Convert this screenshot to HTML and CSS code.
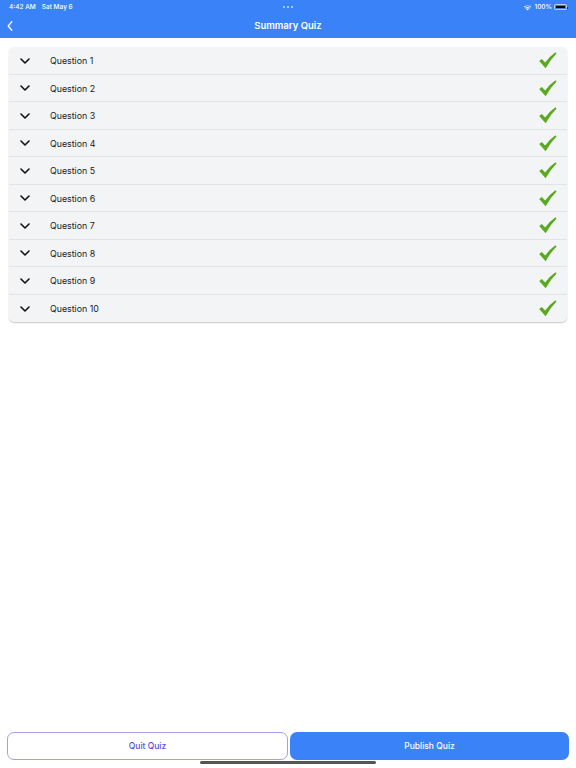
FILE: index.html
```html
<!DOCTYPE html>
<html>
<head>
<meta charset="utf-8">
<link rel="stylesheet" href="styles.css">
</head>
<body>
<div class="app">
  <header class="header">
    <div class="status">
      <div class="status-left"><span>4:42 AM</span><span>Sat May 6</span></div>
      <div class="status-dots"><i></i><i></i><i></i></div>
      <div class="status-right">
        <svg class="wifi" viewBox="0 0 12 9" width="9" height="7"><path d="M6 8.5 L4.2 6.6 A2.6 2.6 0 0 1 7.8 6.6 Z M2.9 5.3 A4.5 4.5 0 0 1 9.1 5.3 L8.3 6.1 A3.4 3.4 0 0 0 3.7 6.1 Z M1.2 3.6 A7 7 0 0 1 10.8 3.6 L10 4.4 A5.8 5.8 0 0 0 2 4.4 Z" fill="#fff"/></svg>
        <span>100%</span>
        <span class="battery"><span class="battery-fill"></span></span>
      </div>
    </div>
    <div class="navbar">
      <svg class="back" viewBox="0 0 8 14" width="6" height="10"><path d="M6.5 1 L1.5 7 L6.5 13" fill="none" stroke="#fff" stroke-width="1.8" stroke-linecap="round" stroke-linejoin="round"/></svg>
      <div class="title">Summary Quiz</div>
    </div>
  </header>

  <main class="content">
    <div class="list">
      <div class="row"><svg class="chev" viewBox="0 0 10 6"><path d="M1 1 L5 5 L9 1" fill="none" stroke="#111" stroke-width="1.6" stroke-linecap="round" stroke-linejoin="round"/></svg><span class="label">Question 1</span><svg class="check" viewBox="0 0 20 18"><path d="M1.2 9.6 L4 7.3 L7.5 11.2 Q12 4.8 18.4 0.3 L19.6 1.6 Q13.2 8 8 17.2 Z" fill="#5aa91f"/></svg></div>
      <div class="row"><svg class="chev" viewBox="0 0 10 6"><path d="M1 1 L5 5 L9 1" fill="none" stroke="#111" stroke-width="1.6" stroke-linecap="round" stroke-linejoin="round"/></svg><span class="label">Question 2</span><svg class="check" viewBox="0 0 20 18"><path d="M1.2 9.6 L4 7.3 L7.5 11.2 Q12 4.8 18.4 0.3 L19.6 1.6 Q13.2 8 8 17.2 Z" fill="#5aa91f"/></svg></div>
      <div class="row"><svg class="chev" viewBox="0 0 10 6"><path d="M1 1 L5 5 L9 1" fill="none" stroke="#111" stroke-width="1.6" stroke-linecap="round" stroke-linejoin="round"/></svg><span class="label">Question 3</span><svg class="check" viewBox="0 0 20 18"><path d="M1.2 9.6 L4 7.3 L7.5 11.2 Q12 4.8 18.4 0.3 L19.6 1.6 Q13.2 8 8 17.2 Z" fill="#5aa91f"/></svg></div>
      <div class="row"><svg class="chev" viewBox="0 0 10 6"><path d="M1 1 L5 5 L9 1" fill="none" stroke="#111" stroke-width="1.6" stroke-linecap="round" stroke-linejoin="round"/></svg><span class="label">Question 4</span><svg class="check" viewBox="0 0 20 18"><path d="M1.2 9.6 L4 7.3 L7.5 11.2 Q12 4.8 18.4 0.3 L19.6 1.6 Q13.2 8 8 17.2 Z" fill="#5aa91f"/></svg></div>
      <div class="row"><svg class="chev" viewBox="0 0 10 6"><path d="M1 1 L5 5 L9 1" fill="none" stroke="#111" stroke-width="1.6" stroke-linecap="round" stroke-linejoin="round"/></svg><span class="label">Question 5</span><svg class="check" viewBox="0 0 20 18"><path d="M1.2 9.6 L4 7.3 L7.5 11.2 Q12 4.8 18.4 0.3 L19.6 1.6 Q13.2 8 8 17.2 Z" fill="#5aa91f"/></svg></div>
      <div class="row"><svg class="chev" viewBox="0 0 10 6"><path d="M1 1 L5 5 L9 1" fill="none" stroke="#111" stroke-width="1.6" stroke-linecap="round" stroke-linejoin="round"/></svg><span class="label">Question 6</span><svg class="check" viewBox="0 0 20 18"><path d="M1.2 9.6 L4 7.3 L7.5 11.2 Q12 4.8 18.4 0.3 L19.6 1.6 Q13.2 8 8 17.2 Z" fill="#5aa91f"/></svg></div>
      <div class="row"><svg class="chev" viewBox="0 0 10 6"><path d="M1 1 L5 5 L9 1" fill="none" stroke="#111" stroke-width="1.6" stroke-linecap="round" stroke-linejoin="round"/></svg><span class="label">Question 7</span><svg class="check" viewBox="0 0 20 18"><path d="M1.2 9.6 L4 7.3 L7.5 11.2 Q12 4.8 18.4 0.3 L19.6 1.6 Q13.2 8 8 17.2 Z" fill="#5aa91f"/></svg></div>
      <div class="row"><svg class="chev" viewBox="0 0 10 6"><path d="M1 1 L5 5 L9 1" fill="none" stroke="#111" stroke-width="1.6" stroke-linecap="round" stroke-linejoin="round"/></svg><span class="label">Question 8</span><svg class="check" viewBox="0 0 20 18"><path d="M1.2 9.6 L4 7.3 L7.5 11.2 Q12 4.8 18.4 0.3 L19.6 1.6 Q13.2 8 8 17.2 Z" fill="#5aa91f"/></svg></div>
      <div class="row"><svg class="chev" viewBox="0 0 10 6"><path d="M1 1 L5 5 L9 1" fill="none" stroke="#111" stroke-width="1.6" stroke-linecap="round" stroke-linejoin="round"/></svg><span class="label">Question 9</span><svg class="check" viewBox="0 0 20 18"><path d="M1.2 9.6 L4 7.3 L7.5 11.2 Q12 4.8 18.4 0.3 L19.6 1.6 Q13.2 8 8 17.2 Z" fill="#5aa91f"/></svg></div>
      <div class="row"><svg class="chev" viewBox="0 0 10 6"><path d="M1 1 L5 5 L9 1" fill="none" stroke="#111" stroke-width="1.6" stroke-linecap="round" stroke-linejoin="round"/></svg><span class="label">Question 10</span><svg class="check" viewBox="0 0 20 18"><path d="M1.2 9.6 L4 7.3 L7.5 11.2 Q12 4.8 18.4 0.3 L19.6 1.6 Q13.2 8 8 17.2 Z" fill="#5aa91f"/></svg></div>
    </div>
  </main>

  <footer class="footer">
    <button class="btn btn-quit">Quit Quiz</button>
    <button class="btn btn-publish">Publish Quiz</button>
  </footer>
  <div class="home-indicator"></div>
</div>
</body>
</html>
```

FILE: styles.css
```css
* { box-sizing: border-box; }
html, body { margin: 0; padding: 0; }
body {
  width: 576px;
  height: 768px;
  background: #fff;
  font-family: "Inter", "Liberation Sans", Arial, sans-serif;
  overflow: hidden;
}
.app {
  position: relative;
  width: 576px;
  height: 768px;
  display: flex;
  flex-direction: column;
}
.header {
  background: #3a82f7;
  color: #fff;
  height: 38px;
  display: flex;
  flex-direction: column;
}
.status {
  height: 14px;
  padding: 0 9px;
  display: flex;
  align-items: center;
  justify-content: space-between;
  font-size: 6.5px;
  font-weight: 500;
  position: relative;
}
.status-left { display: flex; gap: 6px; }
.status-dots {
  position: absolute;
  left: 50%;
  top: 6px;
  transform: translateX(-50%);
  display: flex;
  gap: 2px;
}
.status-dots i {
  width: 2px; height: 2px; border-radius: 50%;
  background: rgba(255,255,255,0.75);
}
.status-right { display: flex; align-items: center; gap: 2px; }
.battery {
  width: 13px; height: 6px;
  border: 0.8px solid rgba(255,255,255,0.6);
  border-radius: 1.5px;
  padding: 0.6px;
  display: flex;
  position: relative;
}
.battery-fill { flex: 1; background: #000; border-radius: 0.6px; }
.battery::after {
  content: "";
  position: absolute;
  right: -2px; top: 1.5px;
  width: 1px; height: 2px;
  background: rgba(0,0,0,0.6);
}
.navbar {
  flex: 1;
  position: relative;
  display: flex;
  align-items: center;
  justify-content: center;
}
.back {
  position: absolute;
  left: 7px;
  top: 7px;
}
.title {
  font-size: 9.5px;
  font-weight: 600;
  padding-bottom: 1px;
}
.content {
  flex: 1;
  padding: 9px 9px 0 9px;
}
.list {
  background: #f3f4f6;
  border-radius: 5px;
  box-shadow: 0 1px 1.5px rgba(0,0,0,0.22);
  overflow: hidden;
}
.row {
  height: 27.5px;
  display: flex;
  align-items: center;
  padding: 1px 10px 0 11px;
  border-bottom: 1px solid #e2e3e7;
}
.row:last-child { border-bottom: none; }
.chev { width: 10px; height: 6px; flex: none; }
.label {
  flex: 1;
  margin-left: 20px;
  font-size: 8.8px;
  color: #1a1a1a;
}
.check { width: 19px; height: 17px; flex: none; }
.footer {
  display: flex;
  gap: 2px;
  padding: 0 7px;
  margin-bottom: 8px;
}
.btn {
  flex: 1;
  height: 28px;
  border-radius: 7px;
  font-family: "Inter", "Liberation Sans", Arial, sans-serif;
  font-size: 8.5px;
  font-weight: 500;
  cursor: pointer;
}
.btn-quit {
  background: #fff;
  border: 1px solid #a79cf0;
  color: #5a4fd8;
}
.btn-publish {
  background: #3a82f7;
  border: none;
  color: #fff;
}
.home-indicator {
  position: absolute;
  left: 200px;
  bottom: 4px;
  width: 176px;
  height: 3px;
  border-radius: 2px;
  background: #555;
}
```
